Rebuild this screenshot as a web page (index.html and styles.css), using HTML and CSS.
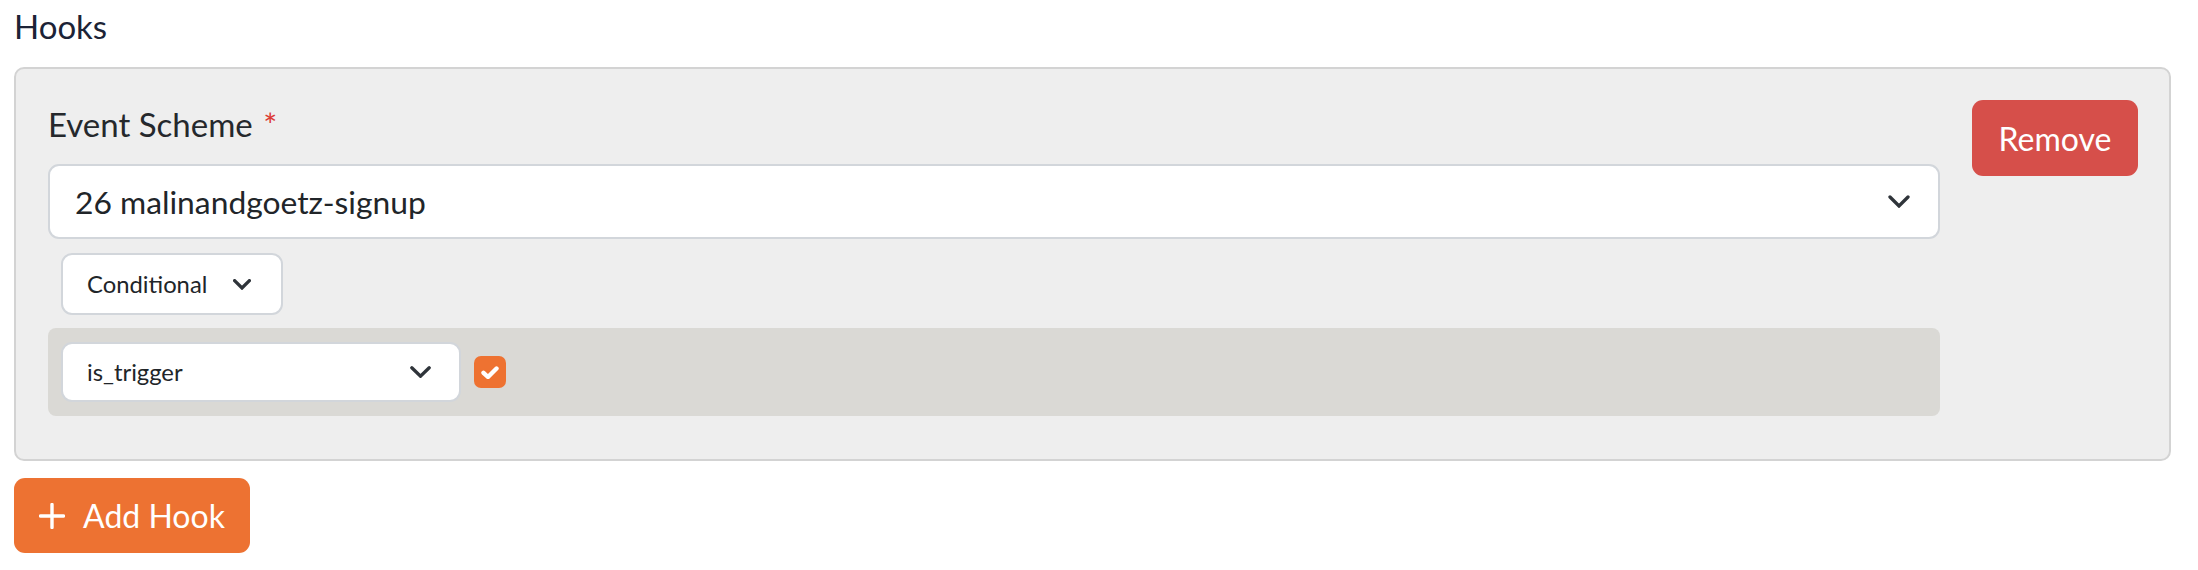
FILE: index.html
```html
<!DOCTYPE html>
<html lang="en">
<head>
<meta charset="utf-8">
<title>Hooks</title>
<link rel="stylesheet" href="styles.css">
</head>
<body>
  <h2 class="section-title">Hooks</h2>
  <div class="hook-card">
    <div class="hook-main">
      <label class="field-label">Event Scheme <span class="req">*</span></label>
      <div class="select select-lg">
        <span>26 malinandgoetz-signup</span>
        <svg class="chev chev-lg" viewBox="0 0 22 13"><path d="M2 2 L11 11 L20 2"/></svg>
      </div>
      <div class="select select-sm cond">
        <span>Conditional</span>
        <svg class="chev chev-sm" viewBox="0 0 18 11"><path d="M1.6 1.6 L9 9 L16.4 1.6"/></svg>
      </div>
      <div class="cond-row">
        <div class="select select-sm field">
          <span>is_trigger</span>
          <svg class="chev chev-md" viewBox="0 0 21 12"><path d="M1.8 1.8 L10.5 10.2 L19.2 1.8"/></svg>
        </div>
        <span class="checkbox">
          <svg viewBox="0 0 18 13"><path d="M2.5 6.8 L7 11 L15.5 2.5"/></svg>
        </span>
      </div>
    </div>
    <button class="btn btn-remove">Remove</button>
  </div>
  <button class="btn btn-add">
    <svg class="plus" viewBox="0 0 26 26"><path d="M13 1.5 V24.5 M1.5 13 H24.5"/></svg>
    <span>Add Hook</span>
  </button>
</body>
</html>
```
FILE: styles.css
```css
* { box-sizing: border-box; }

body {
  margin: 0;
  padding: 3px 27px 0 14px;
  background: #ffffff;
  font-family: Lato, "Open Sans", "Liberation Sans", sans-serif;
  color: #212529;
}

.section-title {
  margin: 0 0 18px;
  font-size: 33px;
  line-height: 46px;
  font-weight: 400;
  color: #1c2336;
}

.hook-card {
  display: flex;
  gap: 32px;
  align-items: flex-start;
  background: #eeeeee;
  border: 2px solid #d3d3d3;
  border-radius: 10px;
  padding: 31px 31px 43px 32px;
}

.hook-main {
  flex: 1;
  display: flex;
  flex-direction: column;
  align-items: flex-start;
}

.field-label {
  display: block;
  height: 48px;
  font-size: 33px;
  line-height: 48px;
  margin-bottom: 16px;
  color: #25282c;
}

.req {
  color: #dc3b34;
  font-size: 33px;
  line-height: 1;
  margin-left: 2px;
}

.select {
  display: flex;
  align-items: center;
  justify-content: space-between;
  background: #ffffff;
  border: 2px solid #d2d6db;
  border-radius: 11px;
  color: #212529;
}

.select-lg {
  align-self: stretch;
  height: 75px;
  padding: 0 28px 0 25px;
  font-size: 31.8px;
}

.select-sm {
  font-size: 23.8px;
}

.cond {
  height: 62px;
  margin: 14px 0 0 13px;
  padding: 0 30px 0 24px;
  gap: 26px;
}

.cond-row {
  align-self: stretch;
  display: flex;
  align-items: center;
  gap: 13px;
  margin-top: 13px;
  padding: 14px 13px;
  background: #dad9d5;
  border-radius: 8px;
}

.field {
  width: 400px;
  height: 60px;
  padding: 0 28px 0 24px;
}

.chev {
  flex: none;
  fill: none;
  stroke: #2f343a;
  stroke-width: 3.3;
  stroke-linecap: round;
  stroke-linejoin: miter;
}
.chev-lg { width: 22px; height: 13px; }
.chev-md { width: 21px; height: 12px; }
.chev-sm { width: 18px; height: 11px; }

.checkbox {
  width: 32px;
  height: 32px;
  border-radius: 7px;
  background: #ee7231;
  display: flex;
  align-items: center;
  justify-content: center;
}
.checkbox svg {
  width: 18px;
  height: 13px;
  fill: none;
  stroke: #ffffff;
  stroke-width: 4.4;
  stroke-linecap: round;
  stroke-linejoin: round;
}

.btn {
  border: none;
  font-family: Lato, "Open Sans", "Liberation Sans", sans-serif;
  color: #ffffff;
  cursor: pointer;
  display: flex;
  align-items: center;
  justify-content: center;
}

.btn-remove {
  flex: none;
  width: 166px;
  height: 76px;
  border-radius: 11px;
  background: #d64f4a;
  font-size: 32px;
}

.btn-add {
  margin-top: 17px;
  width: 236px;
  height: 75px;
  border-radius: 11px;
  background: #ed7232;
  font-size: 32px;
  gap: 18px;
  padding: 0;
}

.plus {
  width: 26px;
  height: 26px;
  fill: none;
  stroke: #ffffff;
  stroke-width: 3.4;
  stroke-linecap: round;
}
```
